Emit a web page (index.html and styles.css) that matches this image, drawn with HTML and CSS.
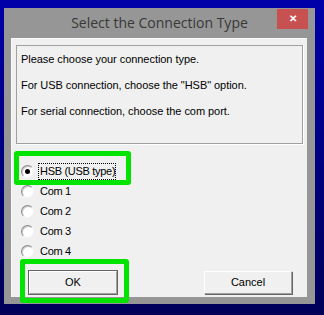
FILE: index.html
```html
<!DOCTYPE html>
<html lang="en">
<head>
    <meta charset="UTF-8">
    <meta name="viewport" content="width=device-width, initial-scale=1.0">
    <title>Select the Connection Type</title>
    <link rel="stylesheet" href="styles.css">
</head>
<body>
    <div class="window">
        <div class="titlebar">
            <span></span>
            <span class="title">Select the Connection Type</span>
            <span class="close">&#x2715;</span>
        </div>
        <div class="client">
            <div class="info">
                <p>Please choose your connection type.</p>
                <p>For USB connection, choose the "HSB" option.</p>
                <p>For serial connection, choose the com port.</p>
            </div>
            <div class="options">
                <div class="option"><span class="radio checked"></span><span class="label focused">HSB (USB type)</span></div>
                <div class="option"><span class="radio"></span><span class="label">Com 1</span></div>
                <div class="option"><span class="radio"></span><span class="label">Com 2</span></div>
                <div class="option"><span class="radio"></span><span class="label">Com 3</span></div>
                <div class="option"><span class="radio"></span><span class="label">Com 4</span></div>
            </div>
            <div class="buttons">
                <button class="btn default">OK</button>
                <button class="btn">Cancel</button>
            </div>
        </div>
    </div>

    <!-- highlight marks drawn over the dialog -->
    <div class="mark mark-hsb"></div>
    <div class="mark mark-ok"></div>
</body>
</html>
```

FILE: styles.css
```css
body {
    margin: 0;
    width: 324px;
    height: 315px;
    overflow: hidden;
    background: linear-gradient(#0000aa, #000058);
    font-family: "Liberation Sans", Arial, sans-serif;
    position: relative;
}
.window {
    margin: 8px 0 0 4px;
    width: 311px;
    height: 296px;
    background-color: #969696;
    box-sizing: border-box;
    padding: 0 8px 0 7px;
}
.titlebar {
    display: grid;
    grid-template-columns: 1fr auto 1fr;
    align-items: start;
    height: 30px;
}
.title {
    font-family: "Open Sans", "Noto Sans", sans-serif;
    font-size: 14px;
    color: #383838;
    line-height: 30px;
    padding-left: 1px;
}
.close {
    justify-self: end;
    margin: 1px -1px 0 0;
    width: 31px;
    height: 20px;
    background-color: #c75050;
    color: white;
    font-size: 10px;
    font-weight: bold;
    text-align: center;
    line-height: 20px;
}
.client {
    height: 259px;
    background-color: #f0f0f0;
    border-left: 1px solid #fafafa;
    border-top: 1px solid #fafafa;
    box-sizing: border-box;
    padding: 6px 4px 0 4px;
    font-size: 11px;
    color: #000;
}
.info {
    height: 99px;
    border: 1px solid #a0a0a0;
    box-shadow: 1px 1px 0 #fff;
    box-sizing: border-box;
    padding: 0 4px;
}
.info p {
    margin: 0;
    line-height: 26px;
    letter-spacing: -0.05px;
}
.options {
    margin-top: 18px;
    padding-left: 5px;
}
.option {
    display: flex;
    align-items: center;
    height: 19.8px;
}
.radio {
    width: 11px;
    height: 11px;
    border-radius: 50%;
    border: 1px solid;
    border-color: #8a8a8a #f4f4f4 #f4f4f4 #8a8a8a;
    background-color: #fff;
    box-shadow: inset 1px 1px 0 #c8c8c8;
    position: relative;
    flex: none;
}
.radio.checked::after {
    content: "";
    position: absolute;
    left: 3px;
    top: 3px;
    width: 5px;
    height: 5px;
    border-radius: 50%;
    background-color: #000;
}
.label {
    margin-left: 4px;
    padding: 1px 0 2px 1px;
    border: 1px dotted transparent;
    letter-spacing: -0.3px;
}
.label.focused {
    border-color: #000;
}
.buttons {
    display: flex;
    justify-content: space-between;
    margin-top: 10px;
    padding: 0 11px 0 13px;
}
.btn {
    width: 88px;
    height: 23px;
    background-color: #f0f0f0;
    font-family: "Liberation Sans", Arial, sans-serif;
    font-size: 11px;
    color: #000;
    padding: 0;
    border: 1px solid;
    border-color: #fff #a0a0a0 #a0a0a0 #fff;
    box-shadow: 1px 1px 0 #646464;
}
.btn.default {
    outline: 1px solid #646464;
    box-shadow: none;
}
.mark {
    position: absolute;
    border: 5px solid #00e400;
    border-radius: 3px;
    box-sizing: border-box;
}
.mark-hsb {
    left: 14px;
    top: 151px;
    width: 117px;
    height: 34px;
}
.mark-ok {
    left: 20px;
    top: 259px;
    width: 109px;
    height: 44px;
}
```
